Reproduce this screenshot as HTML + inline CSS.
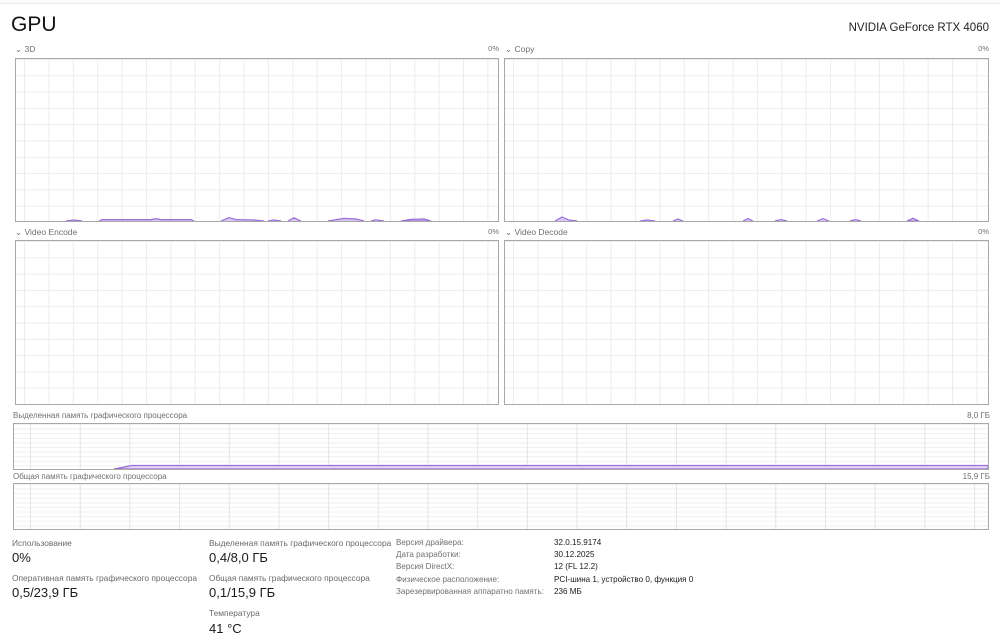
<!DOCTYPE html>
<html><head><meta charset="utf-8"><style>
*{margin:0;padding:0;box-sizing:border-box}
body{width:1000px;height:644px;background:#fff;position:relative;overflow:hidden;font-family:"Liberation Sans","Noto Sans CJK SC",sans-serif;color:#1a1a1a}
.a{position:absolute;white-space:nowrap}
.r{position:absolute;white-space:nowrap;text-align:right}
.topbar{position:absolute;left:0;top:0;width:1000px;height:4px;border-bottom:1px solid #ececec;background:#fafafa}
.lbl{font-size:8.5px;color:#707070}
.g{position:absolute;border:1px solid #a8a8a8;background-color:#fff;
background-image:linear-gradient(to right,#ececec 1px,transparent 1px),linear-gradient(to bottom,#ececec 1px,transparent 1px);
background-size:24.4px 16.3px;background-position:8px 0}
.m{position:absolute;border:1px solid #a8a8a8;background-color:#fff;
background-image:linear-gradient(to right,#e4e4e4 1px,transparent 1px),linear-gradient(to bottom,#f0f0f0 1px,transparent 1px);
background-size:49.7px 4.6px;background-position:16px 0}
.sl{font-size:8.4px;color:#6a6a6a}
.sv{font-size:13px;color:#1a1a1a}
.dl{font-size:8.1px;color:#707070}
.dv{font-size:8.1px;color:#1a1a1a}
svg{position:absolute;left:0;bottom:0}
</style></head><body>
<div class="topbar"></div>
<div class="a" style="left:11px;top:13px;font-size:21px;color:#111">GPU</div>
<div class="r" style="right:11px;top:22px;font-size:11.5px;color:#222">NVIDIA GeForce RTX 4060</div>

<div class="a lbl" style="left:15px;top:44px">⌄ 3D</div>
<div class="r lbl" style="right:501px;top:44px;font-size:7.5px">0%</div>
<div class="a lbl" style="left:505px;top:44px">⌄ Copy</div>
<div class="r lbl" style="right:11px;top:44px;font-size:7.5px">0%</div>

<div class="g" style="left:15px;top:58px;width:484px;height:164px">
<svg width="482" height="20" viewBox="0 0 482 20"><path d="M50 20 L58 19 L66 20 M83 20 L86 18.6 L135 18.6 L140 17.6 L145 18.6 L175 18.6 L178 20 M205 20 L213 16.6 L220 18.6 L238 19 L248 20 M252 20 L258 19 L265 20 M272 20 L278 16.8 L285 20 M312 20 L328 17.4 L340 18 L348 20 M355 20 L360 18.8 L368 20 M385 20 L395 18.4 L408 18 L415 20 Z" fill="#d9c8f2" stroke="#9a6fd8" stroke-width="1.2"/></svg>
</div>
<div class="g" style="left:504px;top:58px;width:485px;height:164px">
<svg width="483" height="20" viewBox="0 0 483 20"><path d="M50 20 L57 16 L64 19 L72 20 M135 20 L142 19 L150 20 M168 20 L173 18 L178 20 M238 20 L243 17.6 L248 20 M270 20 L276 18.6 L282 20 M312 20 L318 17.6 L324 20 M345 20 L350 18.6 L356 20 M402 20 L408 17.2 L414 20 Z" fill="#d9c8f2" stroke="#9a6fd8" stroke-width="1.2"/></svg>
</div>

<div class="a lbl" style="left:15px;top:227px">⌄ Video Encode</div>
<div class="r lbl" style="right:501px;top:227px;font-size:7.5px">0%</div>
<div class="a lbl" style="left:505px;top:227px">⌄ Video Decode</div>
<div class="r lbl" style="right:11px;top:227px;font-size:7.5px">0%</div>
<div class="g" style="left:15px;top:240px;width:484px;height:165px"></div>
<div class="g" style="left:504px;top:240px;width:485px;height:165px"></div>

<div class="a lbl" style="left:13px;top:411px;font-size:8px">Выделенная память графического процессора</div>
<div class="r lbl" style="right:10px;top:411px;font-size:8px">8,0 ГБ</div>
<div class="m" style="left:13px;top:423px;width:976px;height:47px">
<svg width="974" height="6" viewBox="0 0 974 6"><path d="M100 6 L118 2.5 L974 2.5 L974 6 Z" fill="#e4d8f6" stroke="#9a6fd8" stroke-width="1.3"/></svg>
</div>
<div class="a lbl" style="left:13px;top:472px;font-size:8px">Общая память графического процессора</div>
<div class="r lbl" style="right:10px;top:472px;font-size:8px">15,9 ГБ</div>
<div class="m" style="left:13px;top:483px;width:976px;height:47px"></div>

<div class="a sl" style="left:12px;top:538px">Использование</div>
<div class="a sv" style="left:12px;top:550px">0%</div>
<div class="a sl" style="left:12px;top:573px">Оперативная память графического процессора</div>
<div class="a sv" style="left:12px;top:585px">0,5/23,9 ГБ</div>

<div class="a sl" style="left:209px;top:538px">Выделенная память графического процессора</div>
<div class="a sv" style="left:209px;top:550px">0,4/8,0 ГБ</div>
<div class="a sl" style="left:209px;top:573px">Общая память графического процессора</div>
<div class="a sv" style="left:209px;top:585px">0,1/15,9 ГБ</div>
<div class="a sl" style="left:209px;top:608px">Температура</div>
<div class="a sv" style="left:209px;top:621px">41 °C</div>

<div class="a dl" style="left:396px;top:538px">Версия драйвера:</div>
<div class="a dl" style="left:396px;top:550px">Дата разработки:</div>
<div class="a dl" style="left:396px;top:562px">Версия DirectX:</div>
<div class="a dl" style="left:396px;top:575px">Физическое расположение:</div>
<div class="a dl" style="left:396px;top:587px">Зарезервированная аппаратно память:</div>
<div class="a dv" style="left:554px;top:538px">32.0.15.9174</div>
<div class="a dv" style="left:554px;top:550px">30.12.2025</div>
<div class="a dv" style="left:554px;top:562px">12 (FL 12.2)</div>
<div class="a dv" style="left:554px;top:575px">PCI-шина 1, устройство 0, функция 0</div>
<div class="a dv" style="left:554px;top:587px">236 МБ</div>
</body></html>
